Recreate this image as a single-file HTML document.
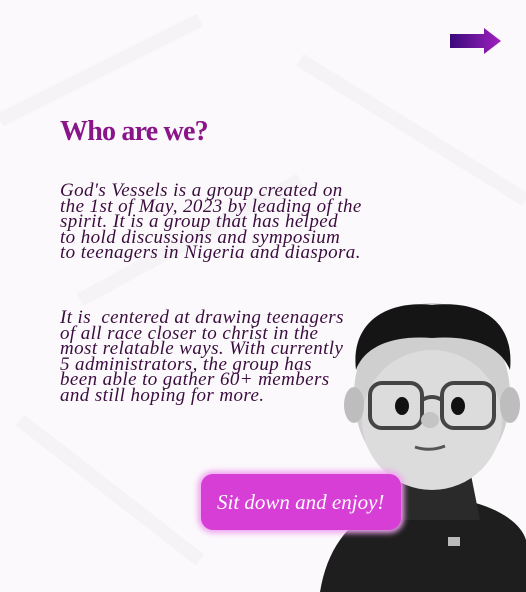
<!DOCTYPE html>
<html><head><style>
body{margin:0;width:526px;height:592px;overflow:hidden;background:#fbf9fb;position:relative;font-family:"Liberation Serif",serif}
.h{position:absolute;left:60px;top:116px;font-size:28px;color:#8a148a;letter-spacing:-0.8px;font-weight:bold}
.p{position:absolute;left:60px;font-size:19px;line-height:15.5px;color:#3a0d3e;font-style:italic;white-space:pre;letter-spacing:0.4px}
.btn{position:absolute;left:201px;top:474px;width:200px;height:56px;border-radius:12px;background:#d63ed6;box-shadow:0 0 6px 3px #f0a4f0;color:#fff;font-style:italic;font-size:21px;font-family:"Liberation Serif",serif;line-height:56px;text-indent:16px;white-space:nowrap}
</style></head><body>
<svg style="position:absolute;left:0;top:0" width="526" height="592">
<path d="M0 120 L200 20 M80 300 L300 180 M300 60 L526 200 M20 420 L200 560" stroke="#f6f3f6" stroke-width="14" fill="none"/>
<defs><linearGradient id="g" x1="0" x2="1"><stop offset="0" stop-color="#3a0a7a"/><stop offset="1" stop-color="#a020c0"/></linearGradient></defs>
<path d="M450 34 H484 V28 L501 41 L484 54 V48 H450 Z" fill="url(#g)"/>
<path d="M320 592 C330 530 370 500 430 495 C490 500 520 520 526 540 V592 Z" fill="#1e1e1e"/>
<path d="M400 470 L470 470 L480 520 L400 520 Z" fill="#2a2a2a"/>
<rect x="448" y="537" width="12" height="9" fill="#bbb"/>
<ellipse cx="432" cy="395" rx="78" ry="92" fill="#cfcfcf"/>
<ellipse cx="432" cy="420" rx="70" ry="70" fill="#dcdcdc"/>
<path d="M356 370 C350 320 390 300 432 305 C480 300 515 320 510 370 C500 345 470 335 432 338 C395 335 365 345 356 370 Z" fill="#151515"/>
<ellipse cx="354" cy="405" rx="10" ry="18" fill="#bdbdbd"/>
<ellipse cx="510" cy="405" rx="10" ry="18" fill="#bdbdbd"/>
<rect x="370" y="383" width="52" height="45" rx="12" fill="none" stroke="#444" stroke-width="4"/>
<rect x="442" y="383" width="52" height="45" rx="12" fill="none" stroke="#444" stroke-width="4"/>
<path d="M422 400 Q432 394 442 400" stroke="#444" stroke-width="4" fill="none"/>
<ellipse cx="402" cy="406" rx="7" ry="9" fill="#111"/>
<ellipse cx="458" cy="406" rx="7" ry="9" fill="#111"/>
<ellipse cx="430" cy="420" rx="9" ry="8" fill="#c4c4c4"/>
<path d="M415 447 Q430 452 445 446" stroke="#555" stroke-width="3" fill="none"/>
</svg>
<div class="h">Who are we?</div>
<div class="p" style="top:183px">God's Vessels is a group created on
the 1st of May, 2023 by leading of the
spirit. It is a group that has helped
to hold discussions and symposium
to teenagers in Nigeria and diaspora.</div>
<div class="p" style="top:310px">It is  centered at drawing teenagers
of all race closer to christ in the
most relatable ways. With currently
5 administrators, the group has
been able to gather 60+ members
and still hoping for more.</div>
<div class="btn">Sit down and enjoy!</div>
</body></html>
